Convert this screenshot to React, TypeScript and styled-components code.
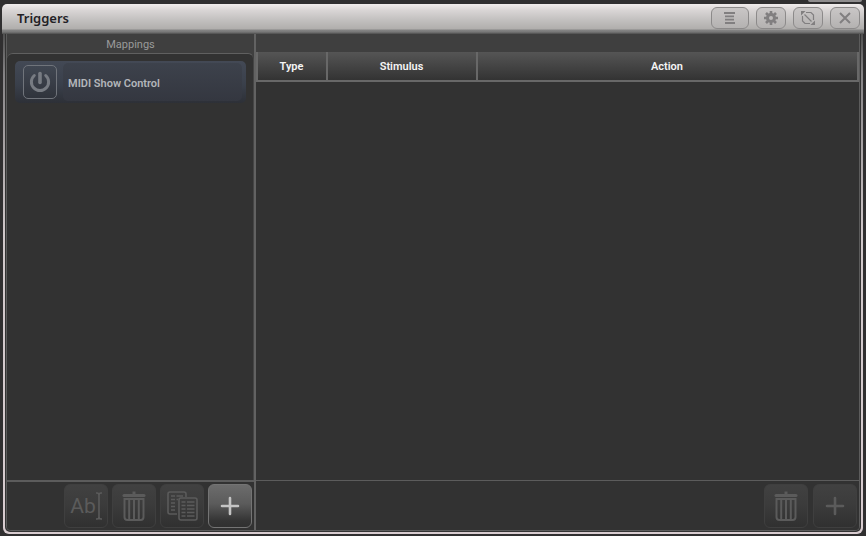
import React from "react";
import styled, { createGlobalStyle } from "styled-components";

const GlobalStyle = createGlobalStyle`
  * { box-sizing: border-box; }
  html, body { margin: 0; background: #302f30; }
  body, button { font-family: Roboto, "Noto Sans", sans-serif; }
`;

const Page = styled.div`
  position: relative;
  display: flex;
  height: 100vh;
  padding: 4px 2px 2px;
  overflow: hidden;
`;

const BackgroundWindowEdge = styled.div`
  position: absolute;
  top: 0;
  right: 4px;
  width: 54px;
  height: 2px;
  border-radius: 0 0 4px 4px;
  background: #8f8d8e;
`;

const Window = styled.main`
  flex: 1;
  min-width: 0;
  display: flex;
  flex-direction: column;
`;

const TitleBar = styled.header`
  flex: none;
  display: flex;
  align-items: center;
  justify-content: space-between;
  height: 30px;
  padding: 0 4px 3px 15px;
  border-radius: 5px 5px 0 0;
  background: linear-gradient(#f0ecec 0, #dad6d6 6px, #c4c2c1 15px, #b0aeac 25px, #858585 26px, #777777 28px, #4c4c4c 30px);
`;

const Title = styled.h1`
  margin: 0;
  font-family: "Noto Sans", sans-serif;
  font-size: 13px;
  line-height: 18px;
  font-weight: 600;
  color: #232125;
`;

const WindowControls = styled.div`
  display: flex;
  gap: 7px;
`;

const ControlButton = styled.button<{ $wide?: boolean }>`
  display: flex;
  align-items: center;
  justify-content: center;
  width: ${(p) => (p.$wide ? 38 : 30)}px;
  height: 22px;
  padding: 0;
  border: 1px solid #8c8a8a;
  border-radius: 6px;
  color: #817f80;
  background: linear-gradient(#c9c6c6, #b4b2b1);
`;

const WindowBody = styled.div`
  flex: 1;
  min-height: 0;
  display: flex;
  margin: 0 1px;
  padding: 0 2px 2px;
  border-radius: 0 0 6px 6px;
  background: linear-gradient(#505050 0, #858385 40px, #d0c8ca 200px, #d8ccd0 100%);
`;

const Frame = styled.div`
  flex: 1;
  min-height: 0;
  display: flex;
  padding: 0 1px 1px;
  border-radius: 0 0 5px 5px;
  background: #333333;
`;

const Content = styled.div`
  flex: 1;
  min-width: 0;
  display: flex;
  border: 1px solid #5c5c5c;
  border-top: 0;
  border-radius: 0 0 5px 5px;
  background: #323232;
  overflow: hidden;
`;

const MappingsPanel = styled.section`
  flex: 0 0 249px;
  display: flex;
  flex-direction: column;
  border-right: 2px solid #626262;
  background: #3f3f3f;
`;

const PanelTitle = styled.h2`
  height: 19px;
  margin: 0;
  font-size: 11px;
  line-height: 22px;
  font-weight: 400;
  text-align: center;
  color: #9a9a9a;
`;

const MappingList = styled.div`
  flex: 1;
  padding: 7px 7px 7px 8px;
  border-top: 1px solid #606060;
  border-right: 1px solid #454545;
  border-radius: 6px 6px 0 0;
  background: #323232;
`;

const MappingRow = styled.div`
  display: flex;
  align-items: center;
  height: 42px;
  padding: 0 4px 0 8px;
  gap: 6px;
  border-radius: 5px;
  background: linear-gradient(#434955, #3a404b 55%, #2d3037);
`;

const PowerButton = styled.button`
  display: flex;
  align-items: center;
  justify-content: center;
  width: 34px;
  height: 34px;
  padding: 0;
  border: 1px solid #70747b;
  border-radius: 5px;
  color: #777b82;
  background: linear-gradient(#414752, #30343c);
`;

const MappingName = styled.span`
  flex: 1;
  height: 38px;
  padding-left: 5px;
  border-radius: 5px;
  font-size: 11px;
  line-height: 42px;
  font-weight: 600;
  color: #b3b6ba;
  background: linear-gradient(#3d424c, #343740);
`;

const Toolbar = styled.footer<{ $thick?: boolean }>`
  flex: none;
  display: flex;
  justify-content: flex-end;
  align-items: center;
  height: 50px;
  padding: 0 2px;
  gap: ${(p) => (p.$thick ? 4 : 5)}px;
  border-top: ${(p) => (p.$thick ? 2 : 1)}px solid #5c5c5c;
  background: #323232;
`;

const ToolButton = styled.button<{ $active?: boolean }>`
  display: flex;
  align-items: center;
  justify-content: center;
  width: 44px;
  height: 44px;
  padding: 0;
  border: 1px solid ${(p) => (p.$active ? "#747474" : "#3f3f3f")};
  border-radius: 6px;
  color: ${(p) => (p.$active ? "#c4c4c4" : "#5b5b5b")};
  background: ${(p) =>
    p.$active
      ? "linear-gradient(#6c6c6c 0, #5b5b5b 45%, #343434 85%, #303030)"
      : "linear-gradient(#414141, #3b3b3b 50%, #303030)"};
`;

const TriggersPanel = styled.section`
  flex: 1;
  min-width: 0;
  display: flex;
  flex-direction: column;
  padding-top: 18px;
  background: #3f3f3f;
`;

const TableArea = styled.div`
  flex: 1;
  background: #323232;
`;

const TriggerTable = styled.table`
  width: 100%;
  table-layout: fixed;
  border-collapse: separate;
  border-spacing: 0;
`;

const ColumnHeader = styled.th<{ $width?: number }>`
  width: ${(p) => (p.$width ? `${p.$width}px` : "auto")};
  height: 30px;
  padding: 2px 1px 0 0;
  border-right: 2px solid #686868;
  border-bottom: 2px solid #686868;
  font-size: 11px;
  line-height: 26px;
  font-weight: 600;
  color: #f5f5f5;
  background: linear-gradient(#555555, #333333);
  &:first-child { border-left: 2px solid #686868; }
`;

const MenuIcon = () => (
  <svg width="12" height="14" viewBox="0 0 12 14" stroke="currentColor" strokeWidth="1.8">
    <path d="M0 2h11M1 5.300h9M1 8.600h9M1 12h10" />
  </svg>
);

const GearIcon = () => (
  <svg width="14" height="14" viewBox="-7 -7 14 14" stroke="currentColor">
    <circle r="3.5" fill="none" strokeWidth="3" />
    <path d="M0-7v3M0 4v3M-7 0h3M4 0h3M-5-5l2 2M3 3l2 2M-5 5l2-2M3-3l2-2" strokeWidth="2.6" />
  </svg>
);

const ResizeIcon = () => (
  <svg width="16" height="16" viewBox="0 0 16 16" fill="none" stroke="currentColor" strokeWidth="1.2">
    <path d="M6 2.500h5l2.500 2.500v5M10 13.500H5L2.500 11V6M4.500 4.500l7 7" />
    <path d="M1 1h4.500L1 5.500zM15 15h-4.500l4.500-4.500z" fill="currentColor" stroke="none" />
  </svg>
);

const CloseIcon = () => (
  <svg width="12" height="12" viewBox="0 0 12 12" stroke="currentColor" strokeWidth="2">
    <path d="M1 1l10 10M11 1L1 11" />
  </svg>
);

const PowerIcon = () => (
  <svg width="24" height="24" viewBox="0 0 24 24" fill="none" stroke="currentColor" strokeWidth="3" strokeLinecap="round">
    <path d="M12 3.500v9" strokeWidth="3.600" />
    <path d="M6.300 5.500a8.600 8.600 0 1 0 11.400 0" />
  </svg>
);

const RenameGlyph = styled.span`
  display: flex;
  align-items: center;
  font-size: 21px;
  line-height: 28px;
`;

const CursorIcon = () => (
  <svg width="6" height="28" viewBox="0 0 6 28" fill="none" stroke="currentColor" strokeWidth="1.6">
    <path d="M0 1h1q2 0 2 2v22q0 2-2 2H0M6 1H5Q3 1 3 3M6 27H5q-2 0-2-2" />
  </svg>
);

const TrashIcon = () => (
  <svg width="24" height="30" viewBox="0 0 24 30" fill="none" stroke="currentColor" strokeWidth="2">
    <path d="M2 4.500h20" strokeWidth="3" strokeLinecap="round" />
    <path d="M12 .5v3" strokeWidth="3" />
    <path d="M2.500 8h19v18q0 3-3 3h-13q-3 0-3-3zM7.200 8v20M12 8v20M16.800 8v20" />
  </svg>
);

const CopyIcon = () => (
  <svg width="32" height="30" viewBox="0 0 32 30" fill="none" stroke="currentColor" strokeWidth="1.6">
    <path d="M11 23H4q-2 0-2-2V3q0-2 2-2h14q2 0 2 2v3" />
    <path d="M5 5h4M10.500 5H17M5 8.500h4M10.500 8.500H12M5 12h4M5 15.500h4M5 19h4" />
    <rect x="13" y="7" width="18" height="22" rx="2" />
    <path d="M15.500 11h4M21 11h7.500M15.500 14.500h4M21 14.500h7.500M15.500 18h4M21 18h7.500M15.500 21.500h4M21 21.500h7.500M15.500 25h4M21 25h7.500" />
  </svg>
);

const PlusIcon = () => (
  <svg width="20" height="20" viewBox="0 0 20 20" fill="none" stroke="currentColor" strokeWidth="2.6" strokeLinecap="round">
    <path d="M10 2v16M2 10h16" />
  </svg>
);

const columns = [
  { label: "Type", width: 72 },
  { label: "Stimulus", width: 150 },
  { label: "Action" },
];

export default function App() {
  return (
    <>
      <GlobalStyle />
      <Page>
        <BackgroundWindowEdge />
        <Window>
          <TitleBar>
            <Title>Triggers</Title>
            <WindowControls>
              <ControlButton $wide aria-label="Menu"><MenuIcon /></ControlButton>
              <ControlButton aria-label="Settings"><GearIcon /></ControlButton>
              <ControlButton aria-label="Resize"><ResizeIcon /></ControlButton>
              <ControlButton aria-label="Close"><CloseIcon /></ControlButton>
            </WindowControls>
          </TitleBar>
          <WindowBody>
            <Frame>
              <Content>
                <MappingsPanel>
                  <PanelTitle>Mappings</PanelTitle>
                  <MappingList>
                    <MappingRow>
                      <PowerButton aria-label="Enable MIDI Show Control"><PowerIcon /></PowerButton>
                      <MappingName>MIDI Show Control</MappingName>
                    </MappingRow>
                  </MappingList>
                  <Toolbar $thick>
                    <ToolButton aria-label="Rename mapping">
                      <RenameGlyph>Ab<CursorIcon /></RenameGlyph>
                    </ToolButton>
                    <ToolButton aria-label="Delete mapping"><TrashIcon /></ToolButton>
                    <ToolButton aria-label="Copy mapping"><CopyIcon /></ToolButton>
                    <ToolButton $active aria-label="Add mapping"><PlusIcon /></ToolButton>
                  </Toolbar>
                </MappingsPanel>
                <TriggersPanel>
                  <TableArea>
                    <TriggerTable>
                      <thead>
                        <tr>
                          {columns.map((c) => (
                            <ColumnHeader key={c.label} scope="col" $width={c.width}>{c.label}</ColumnHeader>
                          ))}
                        </tr>
                      </thead>
                    </TriggerTable>
                  </TableArea>
                  <Toolbar>
                    <ToolButton aria-label="Delete trigger"><TrashIcon /></ToolButton>
                    <ToolButton aria-label="Add trigger"><PlusIcon /></ToolButton>
                  </Toolbar>
                </TriggersPanel>
              </Content>
            </Frame>
          </WindowBody>
        </Window>
      </Page>
    </>
  );
}
